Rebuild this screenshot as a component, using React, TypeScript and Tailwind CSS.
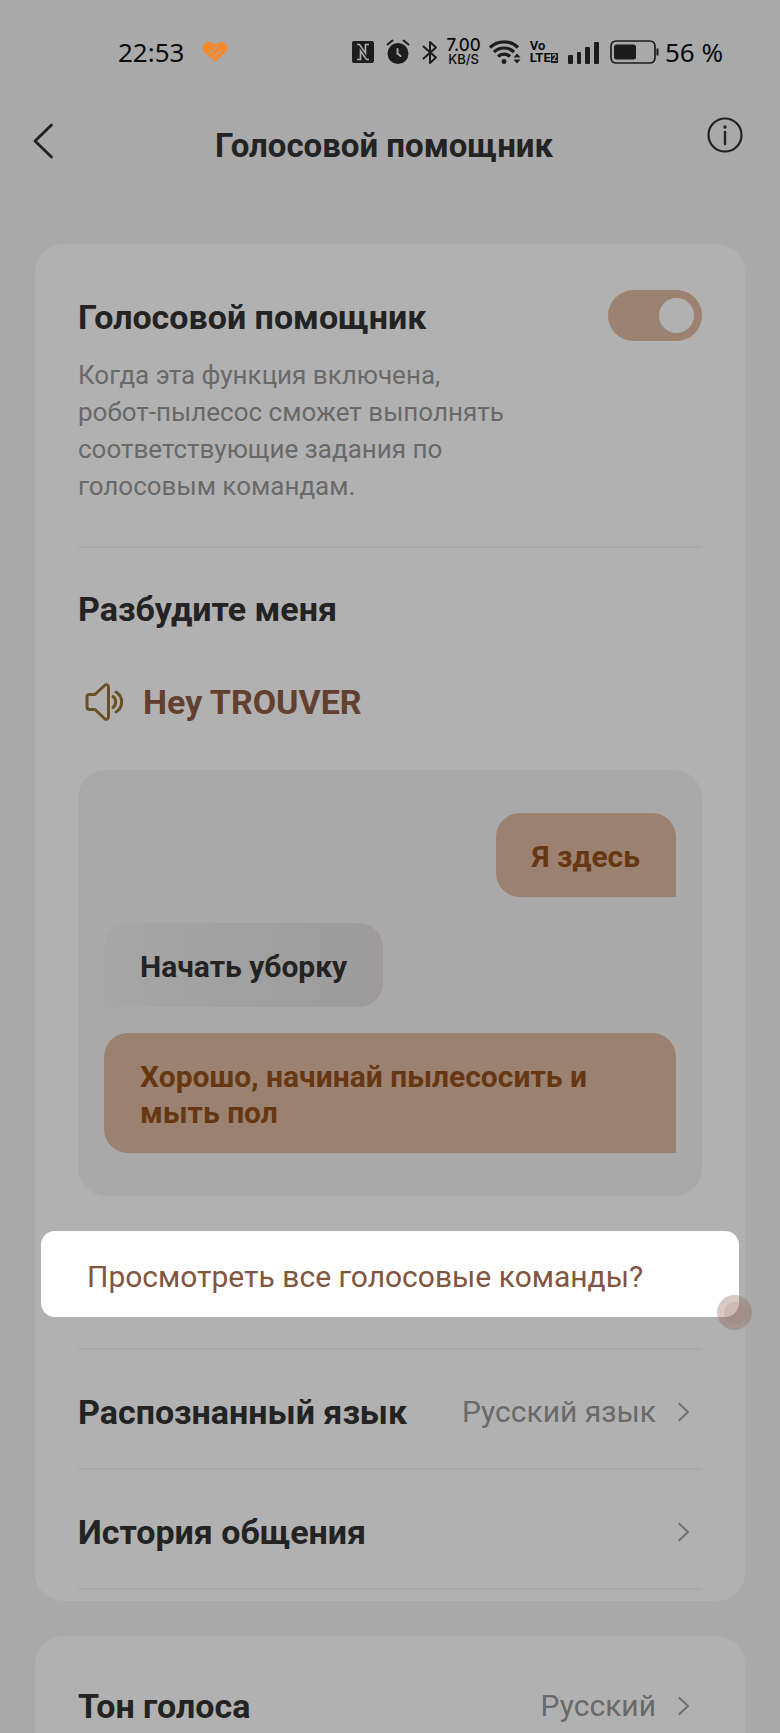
import { useState, type ReactNode } from "react";

function NfcIcon() {
  return (
    <svg width="22" height="22" viewBox="0 0 22 22" aria-hidden="true">
      <rect width="22" height="22" rx="2" fill="#1c1c1c" />
      <path
        d="M5 3.5h2.500L13.500 12V3.500H17M17 18.500h-2.500L8.500 10v8.500H5"
        fill="none"
        stroke="#a9a9a9"
        strokeWidth="1.700"
      />
    </svg>
  );
}

function AlarmIcon() {
  return (
    <svg width="24" height="26" viewBox="0 0 24 26" fill="none" aria-hidden="true">
      <circle cx="12" cy="14.5" r="10.5" fill="#1c1c1c" />
      <path d="M1.5 5.5l5-4M22.5 5.5l-5-4" stroke="#1c1c1c" strokeWidth="2" strokeLinecap="round" />
      <path d="M11.500 10v4.500l3 2.500" stroke="#a9a9a9" strokeWidth="2" strokeLinecap="round" />
    </svg>
  );
}

function BluetoothIcon() {
  return (
    <svg width="16" height="25" viewBox="0 0 16 25" fill="none" aria-hidden="true">
      <path
        d="M1.5 6.5l12.5 11-6 5.5V2l6 5.5-12.5 11"
        stroke="#1c1c1c"
        strokeWidth="2"
        strokeLinejoin="round"
        strokeLinecap="round"
      />
    </svg>
  );
}

function WifiIcon() {
  return (
    <svg width="33" height="26" viewBox="0 0 33 26" fill="none" aria-hidden="true">
      <g stroke="#1c1c1c" strokeWidth="3.200">
        <path d="M1 8.5a20 20 0 0 1 28 0" />
        <path d="M5 13a14.5 14.5 0 0 1 20 0" />
        <path d="M9 17.5a9 9 0 0 1 12 0" />
      </g>
      <circle cx="15" cy="22.5" r="2.4" fill="#1c1c1c" />
      <path d="M24.5 18.5l3.5-4 3.500 4zM24.5 20.500l3.500 4 3.500-4z" fill="#1c1c1c" />
    </svg>
  );
}

function SignalIcon() {
  return (
    <svg width="31" height="23" viewBox="0 0 31 23" fill="#1c1c1c" aria-hidden="true">
      <rect x="0" y="14" width="5" height="9" rx="1" />
      <rect x="9" y="11" width="4" height="12" rx="1" />
      <rect x="17" y="6" width="5" height="17" rx="1" />
      <rect x="26" y="1" width="5" height="22" rx="1" />
    </svg>
  );
}

function BatteryIcon() {
  return (
    <svg width="49" height="24" viewBox="0 0 49 24" fill="none" aria-hidden="true">
      <rect x="1" y="1" width="44" height="22" rx="5" stroke="#1c1c1c" strokeWidth="1.7" />
      <rect x="4" y="4.500" width="22" height="15" rx="2.5" fill="#1c1c1c" />
      <path d="M47.5 8.5v7" stroke="#1c1c1c" strokeWidth="2" />
    </svg>
  );
}

function HeartIcon() {
  return (
    <svg width="26" height="22" viewBox="0 0 26 22" fill="none" aria-hidden="true">
      <path
        d="M13 21L2.5 11.5C-.5 8 .5 3 4 1.5 7.5 0 10.5 1.500 13 4c2.5-2.500 5.500-4 9-2.500s4.500 6.500 1.500 10z"
        fill="#f5892b"
      />
      <path d="M6.500 13l9.500-8M10.500 17l8.500-7.500" stroke="#b5a48f" strokeWidth="1.500" />
    </svg>
  );
}

function SpeakerIcon() {
  return (
    <svg
      width="40"
      height="38"
      viewBox="0 0 40 38"
      fill="none"
      stroke="#6b4f26"
      strokeWidth="3"
      strokeLinecap="round"
      strokeLinejoin="round"
      aria-hidden="true"
    >
      <path d="M4.5 11.5H10L19.5 2.500c1.500-1.500 4-.5 4 1.500v30c0 2-2.500 3-4 1.500L10 26.500H4.500c-1.500 0-2.500-1-2.500-2.500V14c0-1.500 1-2.500 2.500-2.500z" />
      <path d="M28 13.5c3.500 2.500 3.500 8.500 0 11" />
      <path d="M31 9c7.500 4.500 7.500 15.500 0 20" />
    </svg>
  );
}

function Chevron() {
  return (
    <svg width="12" height="20" viewBox="0 0 12 20" fill="none" aria-hidden="true">
      <path d="M1.500 2L10 10l-8.500 8" stroke="#707070" strokeWidth="2" strokeLinecap="round" strokeLinejoin="round" />
    </svg>
  );
}

function StatusBar() {
  return (
    <div className="flex h-[104px] items-center justify-between pr-[57px] pl-[118px] font-['Noto_Sans',sans-serif] text-[26px] leading-8 text-[#0c0c0c]">
      <div className="flex items-center gap-[18px]">
        <span>22:53</span>
        <HeartIcon />
      </div>
      <div className="flex items-center">
        <NfcIcon />
        <span className="ml-3">
          <AlarmIcon />
        </span>
        <span className="ml-3">
          <BluetoothIcon />
        </span>
        <span className="ml-[9px] flex flex-col items-center font-[Inter,sans-serif] font-medium">
          <span className="text-[17px] leading-[15px]">7.00</span>
          <span className="text-[13px] leading-[13px]">KB/S</span>
        </span>
        <span className="ml-2">
          <WifiIcon />
        </span>
        <span className="ml-2 flex flex-col font-[Roboto,sans-serif] text-[13px] leading-[12px] font-bold">
          <span>Vo</span>
          <span className="flex items-center">
            LTE
            <span className="bg-[#1c1c1c] px-px text-[9px] leading-[10px] text-[#a9a9a9]">2</span>
          </span>
        </span>
        <span className="ml-[10px]">
          <SignalIcon />
        </span>
        <span className="ml-[11px]">
          <BatteryIcon />
        </span>
        <span className="ml-[6px]">56 %</span>
      </div>
    </div>
  );
}

function Header() {
  return (
    <header className="flex h-[84px] items-start justify-between pr-9 pl-8">
      <button type="button" aria-label="Назад" className="flex h-[74px] w-10 items-center">
        <svg width="24" height="36" viewBox="0 0 24 36" fill="none" aria-hidden="true">
          <path d="M19.500 2L3 18l16.500 16" stroke="#222" strokeWidth="2.800" strokeLinecap="round" strokeLinejoin="round" />
        </svg>
      </button>
      <h1 className="mr-2 pt-[21px] text-[33px] leading-[42px] font-bold">Голосовой помощник</h1>
      <button type="button" aria-label="Информация" className="flex h-[62px] w-10 items-center justify-end">
        <svg className="shrink-0" width="38" height="38" viewBox="0 0 38 38" fill="none" aria-hidden="true">
          <circle cx="19" cy="19" r="16.500" stroke="#222" strokeWidth="2.200" />
          <path d="M19 16v12" stroke="#222" strokeWidth="2.400" strokeLinecap="round" />
          <circle cx="19" cy="11" r="1.700" fill="#222" />
        </svg>
      </button>
    </header>
  );
}

function Bubble({ mine = false, children }: { mine?: boolean; children: ReactNode }) {
  return (
    <p
      className={
        mine
          ? "self-end rounded-3xl rounded-br-none bg-[#9b8270] px-9 pt-[26px] pb-[22px] text-[#663712]"
          : "self-start rounded-3xl rounded-bl-none bg-linear-to-r from-[#a6a6a6] to-[#9d9b9b] px-9 pt-[26px] pb-[22px] text-[#232323]"
      }
    >
      {children}
    </p>
  );
}

function Row({ label, value }: { label: string; value?: string }) {
  return (
    <button type="button" className="flex w-full items-center pt-[42px] pr-3 pb-9 text-left">
      <span className="flex-1 text-[34px] leading-10 font-bold">{label}</span>
      {value && <span className="mr-[22px] text-[30px] leading-10 text-[#696969]">{value}</span>}
      <Chevron />
    </button>
  );
}

export default function App() {
  const [enabled, setEnabled] = useState(true);

  return (
    <div className="flex min-h-screen flex-col bg-[#a9a9a9] font-[Roboto,sans-serif] text-[#232323]">
      <StatusBar />
      <Header />

      <main className="mt-14 flex flex-1 flex-col gap-[35px] px-[35px]">
        <section className="rounded-[28px] bg-[#b1b1b1] px-[43px] pb-[11px]">
          <div className="flex items-start justify-between pt-[46px]">
            <div>
              <h2 id="assistant" className="pt-[7px] text-[34px] leading-10 font-bold">
                Голосовой помощник
              </h2>
              <p className="mt-5 max-w-[440px] text-[26px] leading-[37px] text-[#696969]">
                Когда эта функция включена, робот-пылесос сможет выполнять соответствующие задания по
                голосовым командам.
              </p>
            </div>
            <input
              type="checkbox"
              role="switch"
              aria-labelledby="assistant"
              checked={enabled}
              onChange={(e) => setEnabled(e.target.checked)}
              className="h-[51px] w-[94px] shrink-0 appearance-none rounded-full bg-[#8c8c8c] p-2 before:block before:size-[35px] before:rounded-full before:bg-[#b1b1b1] checked:bg-[#9c8371] checked:before:ml-auto"
            />
          </div>

          <hr className="mt-[41px] border-t-2 border-[#aaaaaa]" />

          <h2 className="mt-[41px] text-[34px] leading-10 font-bold">Разбудите меня</h2>
          <div className="mt-[53px] flex items-center gap-[18px] pl-[7px]">
            <SpeakerIcon />
            <span className="text-[34px] leading-10 font-bold text-[#633f30]">Hey TROUVER</span>
          </div>

          <div className="mt-[48px] flex flex-col gap-[26px] rounded-[28px] bg-[#a9a9a9] px-[26px] py-[43px] text-[30px] leading-9 font-bold">
            <Bubble mine>Я здесь</Bubble>
            <Bubble>Начать уборку</Bubble>
            <Bubble mine>Хорошо, начинай пылесосить и мыть пол</Bubble>
          </div>

          <div className="relative -mx-[37px] mt-[35px]">
            <button
              type="button"
              className="block w-full rounded-[14px] bg-white px-[46px] pt-[26px] pb-5 text-left text-[30px] leading-10 text-[#825540]"
            >
              Просмотреть все голосовые команды?
            </button>
            {/* touch marker */}
            <span className="pointer-events-none absolute -right-[13px] -bottom-[13px] flex size-[35px] items-center justify-center rounded-full bg-[#8f6455]/35">
              <span className="size-[22px] rounded-full bg-[#8f6455]/15" />
            </span>
          </div>

          <hr className="mt-[31px] border-t-2 border-[#aaaaaa]" />
          <Row label="Распознанный язык" value="Русский язык" />
          <hr className="border-t-2 border-[#aaaaaa]" />
          <Row label="История общения" />
          <hr className="border-t-2 border-[#aaaaaa]" />
        </section>

        <section className="flex-1 rounded-t-[28px] bg-[#b1b1b1] px-[43px] pt-2">
          <Row label="Тон голоса" value="Русский" />
        </section>
      </main>
    </div>
  );
}
